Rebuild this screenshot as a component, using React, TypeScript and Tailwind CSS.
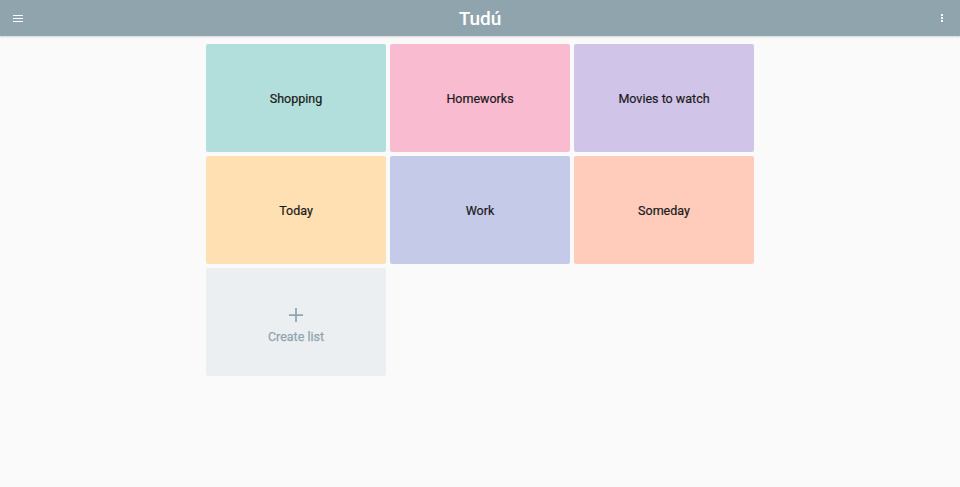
import { useState } from "react";

const lists = [
  { id: 1, name: "Shopping", color: "bg-[#b2dfdb]" },
  { id: 2, name: "Homeworks", color: "bg-[#f8bbd0]" },
  { id: 3, name: "Movies to watch", color: "bg-[#d1c4e9]" },
  { id: 4, name: "Today", color: "bg-[#ffe0b2]" },
  { id: 5, name: "Work", color: "bg-[#c5cae9]" },
  { id: 6, name: "Someday", color: "bg-[#ffccbc]" },
];

export default function App() {
  const [items] = useState(lists);

  return (
    <div className="min-h-[487px] bg-[#fafafa] font-['Roboto',sans-serif]">
      {/* Toolbar */}
      <header className="h-9 bg-[#90a4ae] flex items-center justify-between px-[13px] shadow-[0_1px_2px_rgba(0,0,0,0.15)]">
        <button className="w-[10px] flex flex-col gap-[2px]" aria-label="Menu">
          <span className="block h-px w-[10px] bg-white" />
          <span className="block h-px w-[10px] bg-white" />
          <span className="block h-px w-[10px] bg-white" />
        </button>
        <h1 className="text-white text-[19px] font-medium leading-none">Tudú</h1>
        <button className="w-[10px] flex flex-col items-end gap-[1px] pr-[4px]" aria-label="More">
          <span className="block h-[2px] w-[2px] bg-white" />
          <span className="block h-[2px] w-[2px] bg-white" />
          <span className="block h-[2px] w-[2px] bg-white" />
        </button>
      </header>

      {/* Lists grid */}
      <main className="pt-2 flex justify-center">
        <div className="grid grid-cols-[repeat(3,180px)] auto-rows-[108px] gap-1">
          {items.map((list) => (
            <div
              key={list.id}
              className={`${list.color} rounded-[2px] flex items-center justify-center pt-[2px] text-[12.5px] text-[#1a1a1a] [-webkit-text-stroke:0.2px_#1a1a1a]`}
            >
              {list.name}
            </div>
          ))}
          <div className="bg-[#eceff1] rounded-[2px] flex flex-col items-center justify-center pt-[10px] text-[#90a4ae]">
            <svg width="16" height="16" viewBox="0 0 16 16">
              <path d="M8 1v14M1 8h14" stroke="currentColor" strokeWidth="1.75" />
            </svg>
            <span className="mt-[5px] text-[12.5px] [-webkit-text-stroke:0.25px_#90a4ae]">Create list</span>
          </div>
        </div>
      </main>
    </div>
  );
}
